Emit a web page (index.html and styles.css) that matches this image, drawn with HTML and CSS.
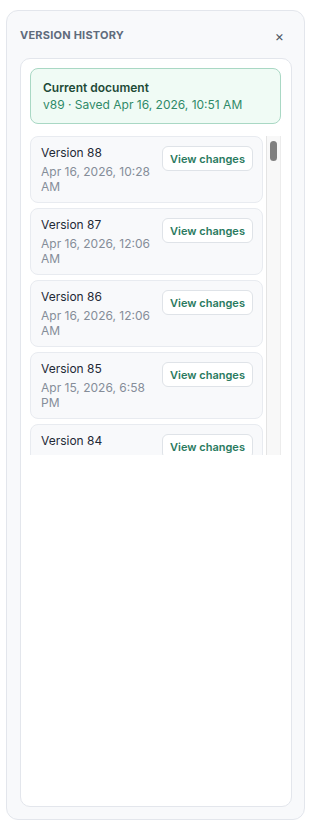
FILE: index.html
```html
<!DOCTYPE html>
<html lang="en">
<head>
<meta charset="UTF-8">
<meta name="viewport" content="width=device-width, initial-scale=1.0">
<title>Version History</title>
<link rel="stylesheet" href="styles.css">
</head>
<body>
  <aside class="panel">
    <div class="panel-head">
      <span class="panel-title">Version History</span>
      <button class="close" aria-label="Close">&times;</button>
    </div>
    <div class="card">
      <div class="current">
        <div class="current-title">Current document</div>
        <div class="current-meta">v89 &middot; Saved Apr 16, 2026, 10:51 AM</div>
      </div>
      <div class="list-wrap">
        <div class="list">
          <div class="item">
            <div class="info">
              <div class="name">Version 88</div>
              <div class="date">Apr 16, 2026, 10:28 AM</div>
            </div>
            <button class="view">View changes</button>
          </div>
          <div class="item">
            <div class="info">
              <div class="name">Version 87</div>
              <div class="date">Apr 16, 2026, 12:06 AM</div>
            </div>
            <button class="view">View changes</button>
          </div>
          <div class="item">
            <div class="info">
              <div class="name">Version 86</div>
              <div class="date">Apr 16, 2026, 12:06 AM</div>
            </div>
            <button class="view">View changes</button>
          </div>
          <div class="item">
            <div class="info">
              <div class="name">Version 85</div>
              <div class="date">Apr 15, 2026, 6:58 PM</div>
            </div>
            <button class="view">View changes</button>
          </div>
          <div class="item">
            <div class="info">
              <div class="name">Version 84</div>
              <div class="date">Apr 15, 2026, 6:52 PM</div>
            </div>
            <button class="view">View changes</button>
          </div>
        </div>
        <div class="scrollbar"><div class="thumb"></div></div>
      </div>
    </div>
  </aside>
</body>
</html>
```

FILE: styles.css
```css
body {
  margin: 0;
  font-family: Inter, "Noto Sans", sans-serif;
  background: #fff;
  overflow: hidden;
}

.panel {
  box-sizing: border-box;
  width: 299px;
  height: 810px;
  margin: 10px 0 0 6px;
  padding: 13px 12px 12px 13px;
  background: #f8f9fb;
  border: 1px solid #e3e6ec;
  border-radius: 12px;
  display: flex;
  flex-direction: column;
}

.panel-head {
  display: flex;
  justify-content: space-between;
  align-items: center;
  height: 22px;
  margin-bottom: 12px;
}

.panel-title {
  font-size: 11px;
  font-weight: 700;
  letter-spacing: 0.02em;
  text-transform: uppercase;
  color: #5f6b7c;
}

.close {
  border: 0;
  background: none;
  padding: 0 8px 0 0;
  font-family: inherit;
  font-size: 14px;
  color: #4b5563;
  cursor: pointer;
}

.card {
  flex: 1;
  background: #fff;
  border: 1px solid #e3e6ec;
  border-radius: 10px;
  padding: 9px 10px 9px 9px;
}

.current {
  background: #f0fbf5;
  border: 1px solid #a9d8c4;
  border-radius: 8px;
  padding: 10px 12px 10px;
}

.current-title {
  font-size: 12px;
  font-weight: 600;
  line-height: 17px;
  color: #1d4a37;
}

.current-meta {
  font-size: 12px;
  line-height: 17px;
  color: #2f8a68;
}

.list-wrap {
  margin-top: 12px;
  height: 319px;
  display: flex;
}

.list {
  flex: 1;
  overflow: hidden;
  padding-right: 3px;
  display: flex;
  flex-direction: column;
  gap: 5px;
}

/* static scrollbar, the list is long */
.scrollbar {
  width: 13px;
  background: #f8f8f8;
  border-left: 1px solid #e4e4e4;
  border-right: 1px solid #ececec;
}

.thumb {
  width: 7px;
  height: 20px;
  margin: 5px auto 0;
  background: #808080;
  border-radius: 4px;
}

.item {
  flex-shrink: 0;
  display: flex;
  justify-content: space-between;
  align-items: flex-start;
  background: #f8f9fb;
  border: 1px solid #e8ebf0;
  border-radius: 8px;
  padding: 8px 9px 8px 10px;
}

.info {
  width: 115px;
}

.name {
  font-size: 12px;
  line-height: 16px;
  color: #1f2937;
}

.date {
  margin-top: 3px;
  font-size: 12px;
  line-height: 15px;
  color: #858d99;
}

.view {
  width: 91px;
  height: 25px;
  margin-top: 1px;
  padding: 0;
  background: #fff;
  border: 1px solid #dfe3e8;
  border-radius: 6px;
  font-family: inherit;
  font-size: 11px;
  font-weight: 600;
  color: #2a7a60;
  cursor: pointer;
}
```
